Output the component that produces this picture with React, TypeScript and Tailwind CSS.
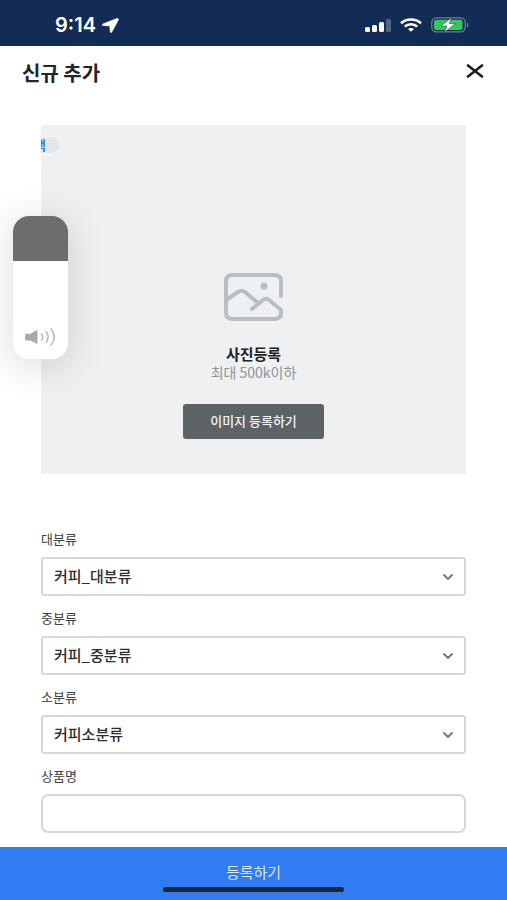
import { ChevronDown } from "lucide-react";

const categories = [
  { id: "large", label: "대분류", value: "커피_대분류" },
  { id: "middle", label: "중분류", value: "커피_중분류" },
  { id: "small", label: "소분류", value: "커피소분류" },
];

function StatusBar() {
  return (
    <div className="flex h-[46px] items-center justify-between bg-[#122c55] pt-1 pr-[38px] pl-[55px] text-white">
      <div className="flex items-center gap-1.5">
        <span className="font-['Inter',sans-serif] text-[20px] leading-6 font-semibold">9:14</span>
        <svg width="17" height="15" viewBox="0 0 17 15" fill="currentColor" aria-hidden="true">
          <path d="M14.800.5.8 6c-1 .4-.8 1.400.2 1.500l6.800.4.4 5.800c.1 1 1.200 1.200 1.700.2L16.300 2c.5-1-.4-1.900-1.500-1.500Z" stroke="currentColor" strokeWidth=".6" />
        </svg>
      </div>
      <div className="flex items-center gap-[9px]">
        <svg width="26" height="14" viewBox="0 0 26 14" fill="currentColor" aria-hidden="true">
          <rect x="0" y="9" width="5" height="5" rx="1.500" />
          <rect x="7" y="7" width="5" height="7" rx="1.500" />
          <rect x="14" y="4" width="5" height="10" rx="1.500" />
          <rect x="21" y="1" width="5" height="13" rx="1.500" opacity=".28" />
        </svg>
        <svg width="22" height="14" viewBox="0 0 22 14" fill="none" stroke="currentColor" strokeWidth="2.600" aria-hidden="true">
          <path d="M1 5.200c5.500-5 14.500-5 20 0" />
          <path d="M4.800 8.600c3.600-3.100 8.800-3.100 12.400 0" />
          <path d="M8 11c1.800-1.500 4.200-1.500 6 0l-3 2.800Z" fill="currentColor" stroke="none" />
        </svg>
        <svg width="38" height="16" viewBox="0 0 38 16" aria-hidden="true">
          <rect x=".8" y=".8" width="33.500" height="14" rx="4.500" fill="none" stroke="#6b7f9b" strokeWidth="1.300" />
          <path d="M36 5.500c2 .7 2 4.300 0 5Z" fill="#6b7f9b" />
          <rect x="3" y="2.800" width="28.500" height="10.200" rx="2" fill="#35c759" />
          <path d="M20.500.8 10 9h6l-2.800 6.400L24.500 6.600h-6.200Z" fill="#fff" stroke="#122c55" strokeWidth=".5" />
        </svg>
      </div>
    </div>
  );
}

function VolumeOverlay() {
  return (
    <div className="absolute top-[216px] left-[13px] flex h-[143px] w-[55px] flex-col overflow-hidden rounded-[16px] bg-white shadow-[0_6px_36px_4px_rgba(0,0,0,0.12)]">
      <div className="h-[45px] bg-[#6d6d6d]" />
      <div className="flex flex-1 items-end justify-center pb-3">
        <svg width="32" height="20" viewBox="0 0 32 20" fill="none" stroke="#b9b9b9" strokeWidth="1.500" strokeLinecap="round" aria-hidden="true">
          <path d="M1 7.300h4.500L12 3.500v13L5.500 13H1Z" fill="#aaa" stroke="#aaa" strokeWidth="1" strokeLinejoin="round" />
          <path d="M16.500 7q2.300 3 0 6" />
          <path d="M21 4.500q4.300 5.500 0 11" />
          <path d="M26 2q6.500 8 0 16" />
        </svg>
      </div>
    </div>
  );
}

function PhotoUpload() {
  return (
    <section className="relative flex h-[349px] flex-col items-center overflow-hidden bg-[#eef0f2] pt-[147px]">
      <span className="absolute top-[11px] -left-4 flex h-[18px] w-9 items-center rounded-full border border-[#f7f8f9] bg-[#e5e8ea] pl-2 text-[13px] font-bold text-[#3680ef]">
        백
      </span>
      <svg width="61" height="51" viewBox="0 0 61 51" fill="none" stroke="#b8bec4" strokeWidth="4" strokeLinecap="round" strokeLinejoin="round" aria-hidden="true">
        <path d="M58 24V9q0-6-7-6H10Q3 3 3 9v32q0 6 7 6h41q7 0 7-6v-3L46 28q-3-2.500-6 0L29 37" />
        <path d="M3 28l12-8q3.500-2.500 7 0l13 11" />
        <circle cx="41" cy="14" r="3.500" fill="#b8bec4" stroke="none" />
      </svg>
      <h2 className="mt-[22px] text-[15px] leading-[18px] font-bold text-[#202225]">사진등록</h2>
      <p className="text-[14px] leading-[18px] text-[#909499]">최대 500k이하</p>
      <button type="button" className="mt-[23px] h-[35px] w-[141px] rounded-[3px] bg-[#5d6264] pb-0.5 text-[13px] font-medium text-[#f4f5f5]">
        이미지 등록하기
      </button>
    </section>
  );
}

export default function App() {
  return (
    <div className="relative flex min-h-screen flex-col bg-white font-['Noto_Sans_CJK_KR',sans-serif] text-[#2b2d30]">
      <StatusBar />
      <header className="flex h-[54px] items-center justify-between pr-[23px] pl-[22px]">
        <h1 className="text-[20px] leading-7 font-bold text-[#222427]">신규 추가</h1>
        <button type="button" aria-label="닫기" className="pb-1">
          <svg width="18" height="14" viewBox="0 0 18 14" fill="none" stroke="#1d1d1f" strokeWidth="2.600" strokeLinecap="round" aria-hidden="true">
            <path d="m2 1.500 14 11M16 1.500l-14 11" />
          </svg>
        </button>
      </header>
      <main className="px-[41px] pt-[25px] pb-[14px]">
        <PhotoUpload />
        <form id="product" className="mt-[55px] flex flex-col gap-3">
          {categories.map((c) => (
            <div key={c.id} className="flex flex-col gap-2">
              <label htmlFor={c.id} className="text-[13px] leading-5 text-[#3c3f42]">
                {c.label}
              </label>
              <div className="relative">
                <select id={c.id} defaultValue={c.value} className="block h-[39px] w-full appearance-none rounded-[3px] border-2 border-[#d5d8da] bg-white px-[11px] text-[15px] font-medium">
                  <option>{c.value}</option>
                </select>
                <ChevronDown className="pointer-events-none absolute top-3 right-2.5 h-4 w-4 text-[#777a7d]" strokeWidth={3} aria-hidden="true" />
              </div>
            </div>
          ))}
          <div className="flex flex-col gap-2">
            <label htmlFor="name" className="text-[13px] leading-5 text-[#3c3f42]">
              상품명
            </label>
            <input id="name" type="text" className="block h-[39px] w-full rounded-[7px] border-2 border-[#d5d8da] bg-white px-[11px] text-[15px]" />
          </div>
        </form>
      </main>
      <footer className="sticky bottom-0 mt-auto">
        <button type="submit" form="product" className="flex h-[53px] w-full flex-col items-center bg-[#327cf3] pt-[14px] text-[15px] leading-[22px] text-[#dbe8ff]">
          등록하기
          <span className="mt-1 h-[5px] w-[181px] rounded-full bg-[#202733]" />
        </button>
      </footer>
      <VolumeOverlay />
    </div>
  );
}
